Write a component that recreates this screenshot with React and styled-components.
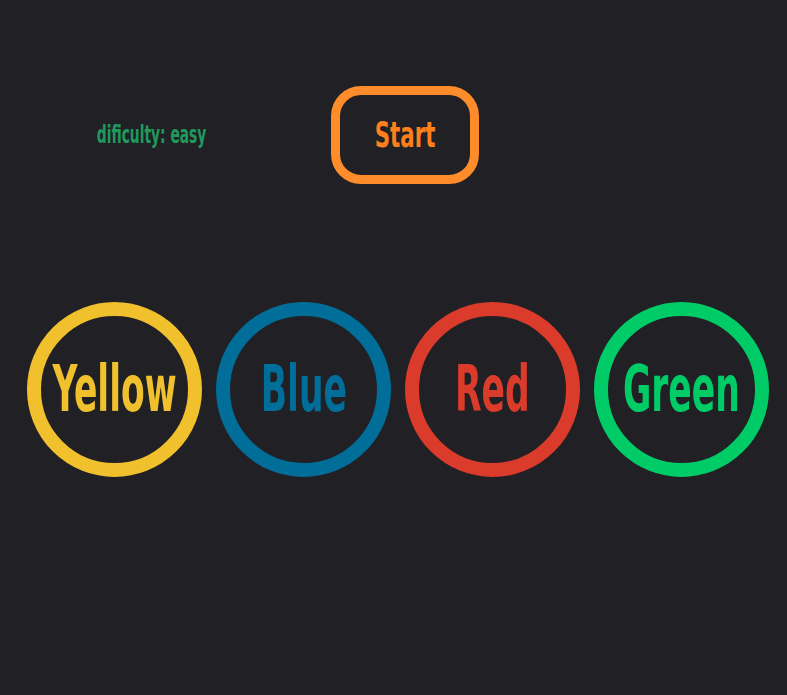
import React, { useState } from 'react'
import styled, { createGlobalStyle } from 'styled-components'

const GlobalStyle = createGlobalStyle`
    html, body {
        margin: 0;
        padding: 0;
        background: #202025;
        height: 100%;
    }
    body {
        font-family: "DejaVu Sans Condensed", "Liberation Sans", sans-serif;
    }
`

const Page = styled.div`
    min-height: 695px;
    padding: 86px 0 0 27px;
    box-sizing: border-box;
`

const Controls = styled.div`
    display: flex;
    align-items: center;
`

// narrow, tall lettering like the original display face
const Squeeze = styled.span`
    display: inline-block;
    white-space: nowrap;
    font-weight: bold;
    transform: scaleX(${p => p.$x || 0.66});
    transform-origin: center;
`

const Difficulty = styled.div`
    width: 250px;
    display: flex;
    justify-content: center;
    color: #1f9a5c;
    font-size: 24px;
    margin-right: 54px;
`

const StartBtn = styled.button`
    width: 148px;
    height: 98px;
    box-sizing: border-box;
    border: 9px solid #fe8c2b;
    border-radius: 30px;
    background: transparent;
    color: #ff7f1c;
    font-family: inherit;
    font-size: 36px;
    display: flex;
    align-items: center;
    justify-content: center;
    padding: 0 0 2px;
    cursor: pointer;
`

const Board = styled.div`
    display: flex;
    gap: 14px;
    margin-top: 118px;
`

const Pad = styled.button`
    width: 175px;
    height: 175px;
    box-sizing: border-box;
    border-radius: 50%;
    border: 14px solid ${p => p.$color};
    color: ${p => p.$color};
    background: transparent;
    font-family: inherit;
    font-size: 64px;
    display: flex;
    align-items: center;
    justify-content: center;
    padding: 0 0 2px;
    cursor: pointer;
`

const pads = [
    { name: 'Yellow', color: '#f0c12d' },
    { name: 'Blue', color: '#006e99' },
    { name: 'Red', color: '#db3b2b' },
    { name: 'Green', color: '#00cc67' },
]

function App() {
    const [level] = useState('easy')

    return (
        <Page>
            <GlobalStyle />
            <Controls>
                <Difficulty><Squeeze $x={0.64}>dificulty: {level}</Squeeze></Difficulty>
                <StartBtn><Squeeze $x={0.66}>Start</Squeeze></StartBtn>
            </Controls>
            <Board>
                {pads.map(pad => (
                    <Pad key={pad.name} $color={pad.color}>
                        <Squeeze $x={0.6}>{pad.name}</Squeeze>
                    </Pad>
                ))}
            </Board>
        </Page>
    )
}

export default App
